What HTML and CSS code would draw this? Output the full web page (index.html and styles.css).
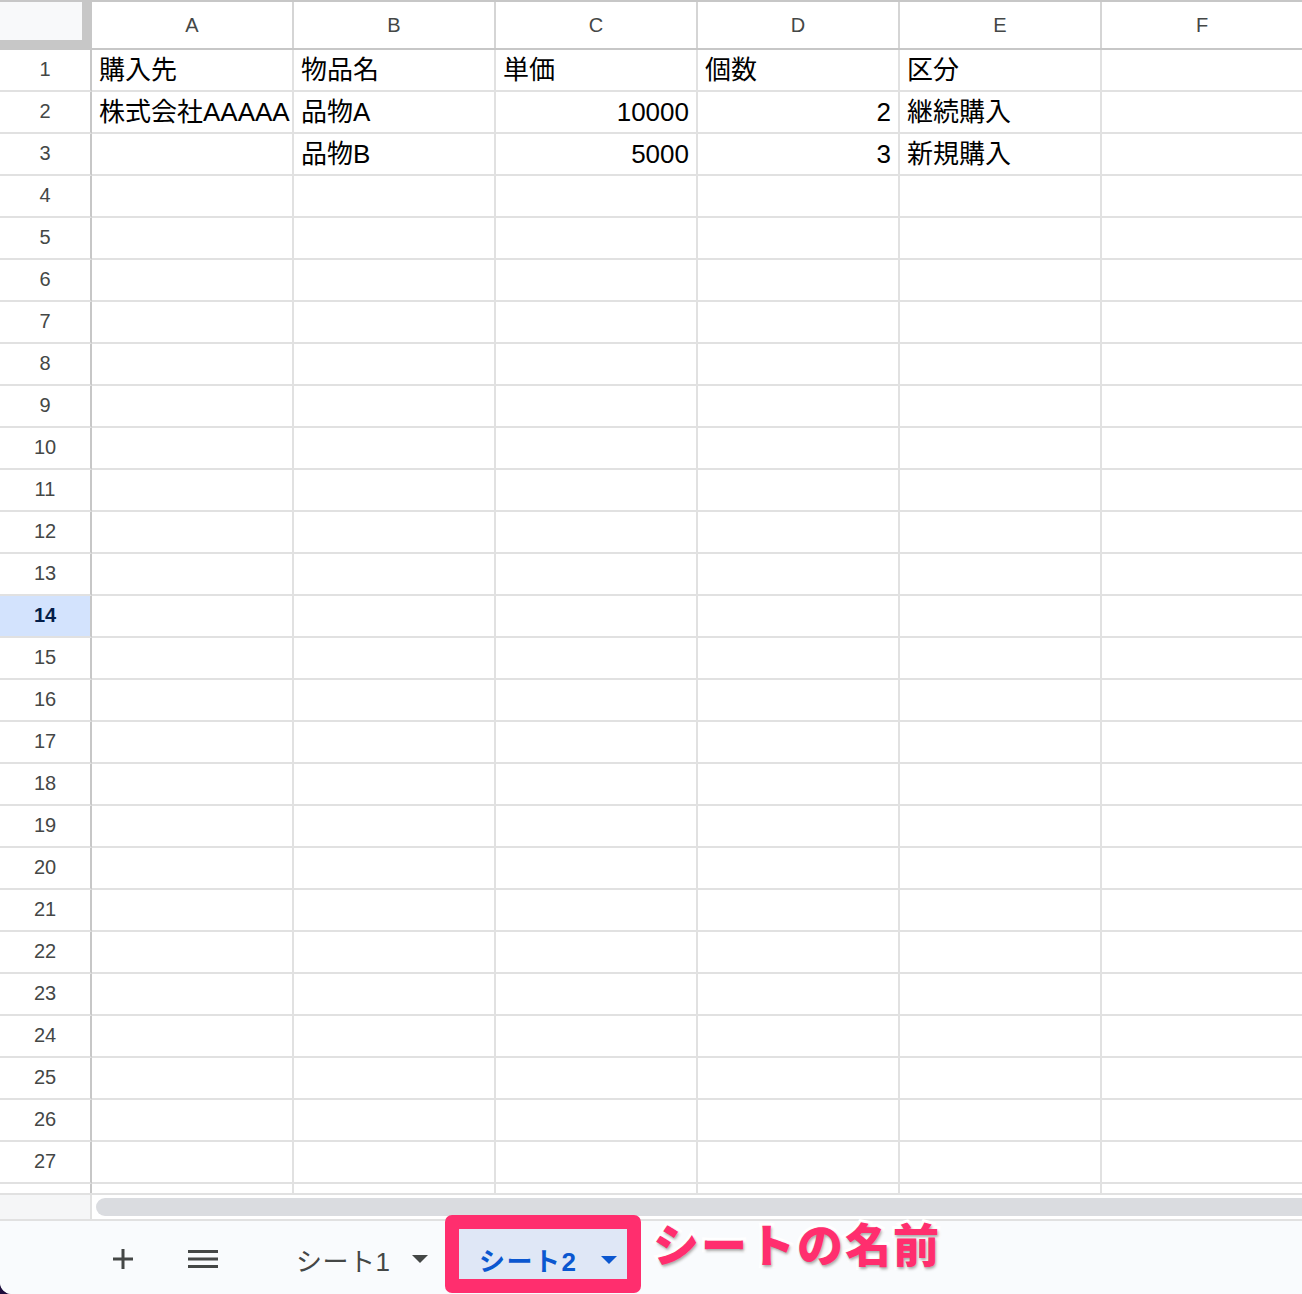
FILE: index.html
```html
<!DOCTYPE html>
<html lang="ja">
<head>
    <meta charset="UTF-8">
    <meta name="viewport" content="width=device-width, initial-scale=1.0">
    <title>シートの名前</title>
    <link rel="stylesheet" href="styles.css">
</head>
<body>
    <div class="app">
        <!-- グリッド -->
        <div class="sheet">
            <div class="hdr">
                <div class="corner"></div>
                <div class="ch">A</div>
                <div class="ch">B</div>
                <div class="ch">C</div>
                <div class="ch">D</div>
                <div class="ch">E</div>
                <div class="ch">F</div>
            </div>
            <div class="row"><div class="rh">1</div><div class="c">購入先</div><div class="c">物品名</div><div class="c">単価</div><div class="c">個数</div><div class="c">区分</div><div class="c"></div></div>
            <div class="row"><div class="rh">2</div><div class="c">株式会社AAAAA</div><div class="c">品物A</div><div class="c num">10000</div><div class="c num">2</div><div class="c">継続購入</div><div class="c"></div></div>
            <div class="row"><div class="rh">3</div><div class="c"></div><div class="c">品物B</div><div class="c num">5000</div><div class="c num">3</div><div class="c">新規購入</div><div class="c"></div></div>
            <div class="row"><div class="rh">4</div><div class="c"></div><div class="c"></div><div class="c"></div><div class="c"></div><div class="c"></div><div class="c"></div></div>
            <div class="row"><div class="rh">5</div><div class="c"></div><div class="c"></div><div class="c"></div><div class="c"></div><div class="c"></div><div class="c"></div></div>
            <div class="row"><div class="rh">6</div><div class="c"></div><div class="c"></div><div class="c"></div><div class="c"></div><div class="c"></div><div class="c"></div></div>
            <div class="row"><div class="rh">7</div><div class="c"></div><div class="c"></div><div class="c"></div><div class="c"></div><div class="c"></div><div class="c"></div></div>
            <div class="row"><div class="rh">8</div><div class="c"></div><div class="c"></div><div class="c"></div><div class="c"></div><div class="c"></div><div class="c"></div></div>
            <div class="row"><div class="rh">9</div><div class="c"></div><div class="c"></div><div class="c"></div><div class="c"></div><div class="c"></div><div class="c"></div></div>
            <div class="row"><div class="rh">10</div><div class="c"></div><div class="c"></div><div class="c"></div><div class="c"></div><div class="c"></div><div class="c"></div></div>
            <div class="row"><div class="rh">11</div><div class="c"></div><div class="c"></div><div class="c"></div><div class="c"></div><div class="c"></div><div class="c"></div></div>
            <div class="row"><div class="rh">12</div><div class="c"></div><div class="c"></div><div class="c"></div><div class="c"></div><div class="c"></div><div class="c"></div></div>
            <div class="row"><div class="rh">13</div><div class="c"></div><div class="c"></div><div class="c"></div><div class="c"></div><div class="c"></div><div class="c"></div></div>
            <div class="row"><div class="rh active">14</div><div class="c"></div><div class="c"></div><div class="c"></div><div class="c"></div><div class="c"></div><div class="c"></div></div>
            <div class="row"><div class="rh">15</div><div class="c"></div><div class="c"></div><div class="c"></div><div class="c"></div><div class="c"></div><div class="c"></div></div>
            <div class="row"><div class="rh">16</div><div class="c"></div><div class="c"></div><div class="c"></div><div class="c"></div><div class="c"></div><div class="c"></div></div>
            <div class="row"><div class="rh">17</div><div class="c"></div><div class="c"></div><div class="c"></div><div class="c"></div><div class="c"></div><div class="c"></div></div>
            <div class="row"><div class="rh">18</div><div class="c"></div><div class="c"></div><div class="c"></div><div class="c"></div><div class="c"></div><div class="c"></div></div>
            <div class="row"><div class="rh">19</div><div class="c"></div><div class="c"></div><div class="c"></div><div class="c"></div><div class="c"></div><div class="c"></div></div>
            <div class="row"><div class="rh">20</div><div class="c"></div><div class="c"></div><div class="c"></div><div class="c"></div><div class="c"></div><div class="c"></div></div>
            <div class="row"><div class="rh">21</div><div class="c"></div><div class="c"></div><div class="c"></div><div class="c"></div><div class="c"></div><div class="c"></div></div>
            <div class="row"><div class="rh">22</div><div class="c"></div><div class="c"></div><div class="c"></div><div class="c"></div><div class="c"></div><div class="c"></div></div>
            <div class="row"><div class="rh">23</div><div class="c"></div><div class="c"></div><div class="c"></div><div class="c"></div><div class="c"></div><div class="c"></div></div>
            <div class="row"><div class="rh">24</div><div class="c"></div><div class="c"></div><div class="c"></div><div class="c"></div><div class="c"></div><div class="c"></div></div>
            <div class="row"><div class="rh">25</div><div class="c"></div><div class="c"></div><div class="c"></div><div class="c"></div><div class="c"></div><div class="c"></div></div>
            <div class="row"><div class="rh">26</div><div class="c"></div><div class="c"></div><div class="c"></div><div class="c"></div><div class="c"></div><div class="c"></div></div>
            <div class="row"><div class="rh">27</div><div class="c"></div><div class="c"></div><div class="c"></div><div class="c"></div><div class="c"></div><div class="c"></div></div>
            <div class="row"><div class="rh"></div><div class="c"></div><div class="c"></div><div class="c"></div><div class="c"></div><div class="c"></div><div class="c"></div></div>
        </div>

        <!-- 横スクロール -->
        <div class="hscroll">
            <div class="hs-corner"></div>
            <div class="hs-thumb"></div>
        </div>

        <!-- シートタブ -->
        <div class="tabbar">
            <button class="tb-btn add">
                <svg width="20" height="20" viewBox="0 0 20 20"><path d="M10 0v20M0 10h20" stroke="#444746" stroke-width="3" fill="none"/></svg>
            </button>
            <button class="tb-btn menu">
                <svg width="30" height="18" viewBox="0 0 30 18"><path d="M0 1.5h30M0 9h30M0 16.5h30" stroke="#444746" stroke-width="3" fill="none"/></svg>
            </button>
            <div class="tab">
                <span>シート1</span>
                <span class="caret"></span>
            </div>
            <div class="tab-mark">
                <div class="tab current">
                    <span>シート2</span>
                    <span class="caret"></span>
                </div>
            </div>
            <div class="note">シートの名前</div>
        </div>
    </div>
</body>
</html>
```

FILE: styles.css
```css
* {
    margin: 0;
    padding: 0;
    box-sizing: border-box;
}

body {
    background: #1d0e3c;
    font-family: "Liberation Sans", "Noto Sans CJK JP", sans-serif;
    width: 1302px;
    height: 1294px;
    overflow: hidden;
}

.app {
    width: 1302px;
    height: 1294px;
    background: #fff;
    border-bottom-left-radius: 12px;
    overflow: hidden;
}

/* グリッド */
.sheet {
    height: 1193px;
    overflow: hidden;
}

.hdr {
    display: flex;
    height: 50px;
    border-top: 2px solid #c7c7c7;
    border-bottom: 2px solid #c7c7c7;
}

.corner {
    position: relative;
    flex: 0 0 92px;
    background: #c7c7c7;
    margin-top: -2px;
    height: 48px;
}

.corner::before {
    content: '';
    position: absolute;
    top: 2px;
    left: 0;
    width: 82px;
    height: 38px;
    background: #f8f9fa;
}

.ch {
    flex: 0 0 202px;
    border-right: 2px solid #d5d5d5;
    text-align: center;
    line-height: 46px;
    font-size: 20px;
    color: #444746;
}

.row {
    display: flex;
    height: 42px;
}

.rh {
    flex: 0 0 92px;
    border-right: 2px solid #c7c7c7;
    border-bottom: 2px solid #e1e1e1;
    text-align: center;
    line-height: 38px;
    font-size: 20px;
    color: #444746;
}

.rh.active {
    background: #d3e3fd;
    color: #041e49;
    font-weight: bold;
}

.c {
    flex: 0 0 202px;
    border-right: 2px solid #e1e1e1;
    border-bottom: 2px solid #e1e1e1;
    padding: 0 7px;
    line-height: 40px;
    font-size: 26px;
    color: #000;
    white-space: nowrap;
    overflow: hidden;
}

.c.num {
    text-align: right;
}

/* 横スクロール */
.hscroll {
    display: flex;
    height: 28px;
    border-top: 2px solid #e1e1e1;
    border-bottom: 2px solid #e1e1e1;
}

.hs-corner {
    flex: 0 0 92px;
    background: #f5f6f7;
    border-right: 2px solid #e1e1e1;
}

.hs-thumb {
    flex: 1;
    height: 18px;
    margin: 3px -20px 0 4px;
    background: #dadce0;
    border-radius: 9px;
}

/* シートタブ */
.tabbar {
    position: relative;
    display: flex;
    align-items: center;
    height: 73px;
    padding-top: 3px;
    background: #f9fbfd;
}

.tb-btn {
    display: flex;
    justify-content: center;
    align-items: center;
    width: 40px;
    height: 40px;
    border: none;
    background: none;
}

.tb-btn.add {
    margin-left: 103px;
}

.tb-btn.menu {
    margin-left: 40px;
}

.tab {
    display: flex;
    align-items: center;
    margin-left: 62px;
    width: 160px;
    padding-left: 11px;
    font-size: 26px;
    color: #444746;
    letter-spacing: 0.5px;
}

.caret {
    width: 0;
    height: 0;
    margin-left: 22px;
    border-left: 8px solid transparent;
    border-right: 8px solid transparent;
    border-top: 8px solid #444746;
}

.tab-mark {
    align-self: flex-start;
    margin-top: -9px;
    border: 14px solid #ff2e6e;
    border-radius: 7px;
    width: 196px;
    height: 78px;
}

.tab.current {
    margin-left: 0;
    width: 168px;
    height: 50px;
    padding: 11px 0 0 20px;
    background: #dfe7f6;
    color: #0b57d0;
    font-weight: bold;
    letter-spacing: 1.5px;
}

.tab.current .caret {
    margin-left: 24px;
    border-top-color: #0b57d0;
}

/* 注釈 */
.note {
    position: absolute;
    left: 653px;
    top: -4px;
    font-family: "Noto Sans CJK JP", sans-serif;
    font-size: 46px;
    font-weight: 900;
    line-height: 50px;
    letter-spacing: 2px;
    color: #ff2e6e;
    -webkit-text-stroke: 6px #fff;
    paint-order: stroke fill;
    text-shadow: 1px 2px 3px rgba(0, 0, 0, 0.35);
}
```
